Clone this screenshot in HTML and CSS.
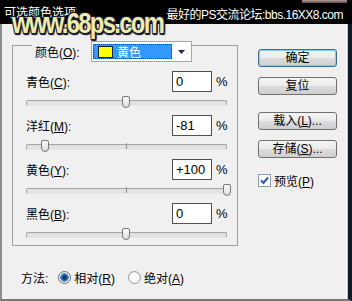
FILE: index.html
```html
<!DOCTYPE html>
<html lang="zh-CN">
<head>
    <meta charset="UTF-8">
    <title>可选颜色选项</title>
    <link rel="stylesheet" href="styles.css">
</head>
<body>
<div class="dlg">
    <div class="titlebar">
        <span class="title">可选颜色选项</span>
        <span class="forum">最好的PS交流论坛:bbs.16XX8.com</span>
        <span class="closebtn"></span>
    </div>
    <div class="wm">www.68ps.com</div>

    <div class="main">
        <div class="left">
            <div class="group">
                <div class="group-head">
                    <span class="lbl">颜色(<u>O</u>):</span>
                    <div class="select">
                        <div class="sel-val"><span class="swatch"></span>黄色</div>
                        <div class="sel-btn">
                            <svg width="7" height="4" viewBox="0 0 7 4"><path d="M0 0h7L3.5 4z" fill="#1a2a5a"/></svg>
                        </div>
                    </div>
                </div>

                <div class="chan">
                    <div class="chan-row"><span class="lbl">青色(<u>C</u>):</span><span class="num">0</span><span class="pct">%</span></div>
                    <div class="slider"><span class="thumb" style="left:96px"></span></div>
                </div>
                <div class="chan">
                    <div class="chan-row"><span class="lbl">洋红(<u>M</u>):</span><span class="num">-81</span><span class="pct">%</span></div>
                    <div class="slider tick"><span class="thumb" style="left:15px"></span></div>
                </div>
                <div class="chan">
                    <div class="chan-row"><span class="lbl">黄色(<u>Y</u>):</span><span class="num">+100</span><span class="pct">%</span></div>
                    <div class="slider tick"><span class="thumb" style="left:197px"></span></div>
                </div>
                <div class="chan">
                    <div class="chan-row"><span class="lbl">黑色(<u>B</u>):</span><span class="num">0</span><span class="pct">%</span></div>
                    <div class="slider"><span class="thumb" style="left:96px"></span></div>
                </div>
            </div>

            <div class="method">
                <span class="m-lbl">方法:</span>
                <span class="radio on"></span><span class="r-txt">相对(<u>R</u>)</span>
                <span class="radio"></span><span class="r-txt">绝对(<u>A</u>)</span>
            </div>
        </div>

        <div class="right">
            <div class="btn default">确定</div>
            <div class="btn">复位</div>
            <div class="btn gap">载入(<u>L</u>)...</div>
            <div class="btn">存储(<u>S</u>)...</div>
            <div class="check">
                <span class="box">
                    <svg width="9" height="9" viewBox="0 0 9 9"><path d="M1 4.5l2.5 2.5L8 1.5" fill="none" stroke="#2a5aa8" stroke-width="2"/></svg>
                </span>
                <span>预览(<u>P</u>)</span>
            </div>
        </div>
    </div>
</div>
</body>
</html>
```

FILE: styles.css
```css
* {
    box-sizing: border-box;
}

body {
    margin: 0;
    background: #f0f0f0;
}

.dlg {
    position: relative;
    width: 352px;
    height: 301px;
    display: flex;
    flex-direction: column;
    font: 12px "Liberation Sans", "Noto Sans CJK SC", sans-serif;
    color: #000;
    overflow: hidden;
}

u {
    text-decoration: underline;
    text-underline-offset: 1px;
}

/* title bar */
.titlebar {
    position: relative;
    height: 24px;
    background: #000;
    color: #fff;
    display: flex;
    align-items: flex-start;
    flex-shrink: 0;
}

.title {
    margin: 6px 0 0 4px;
    line-height: 14px;
}

.forum {
    margin: 8px 0 0 auto;
    padding-right: 9px;
    line-height: 14px;
    letter-spacing: -0.5px;
}

.closebtn {
    position: absolute;
    right: 5px;
    top: 0;
    width: 45px;
    height: 3px;
    background: linear-gradient(#b89a9a, #5a4a4a);
}

/* watermark over the title bar */
.wm {
    position: absolute;
    left: 12px;
    top: 8px;
    font: bold 29px "Liberation Sans", sans-serif;
    letter-spacing: -2px;
    line-height: 30px;
    color: #ececae;
    transform: scaleX(0.82);
    transform-origin: 0 0;
    text-shadow: 1px 1px 0 #1a1a30, -1px -1px 0 #1a1a30, 1px -1px 0 #1a1a30, -1px 1px 0 #1a1a30,
                 2px 2px 1px #1a1a30, 0 2px 1px #1a1a30, 2px 0 1px #1a1a30;
}

/* dialog body */
.main {
    flex: 1;
    display: flex;
    background: #f0f0f0;
    border-left: 2px solid #8c8c8c;
    border-right: 4px solid #0e1a26;
    border-bottom: 2px solid #777;
    box-shadow: inset -1px 0 0 #b4c4d8, inset -2px 0 0 #fff;
}

.left {
    width: 256px;
    padding: 21px 0 0 10px;
}

.group {
    width: 226px;
    border: 1px solid #a0a0a0;
    padding: 0 10px 5px 13px;
}

.group-head {
    display: inline-flex;
    align-items: center;
    height: 21px;
    margin: -8px 0 0 6px;
    padding: 0 0 0 3px;
    background: #f0f0f0;
}

.group-head .lbl {
    width: 56px;
}

.select {
    display: flex;
    width: 101px;
    height: 21px;
    border: 1px solid #a8a8a8;
    background: #fff;
    padding: 2px 1px 2px 1px;
}

.sel-val {
    width: 79px;
    display: flex;
    align-items: center;
    background: #3399ff;
    outline: 1px dotted #333;
    outline-offset: -1px;
    color: #fff;
    padding-left: 5px;
}

.swatch {
    width: 15px;
    height: 12px;
    background: #ffff00;
    border: 1px solid #202020;
    margin-right: 4px;
}

.sel-btn {
    flex: 1;
    display: flex;
    align-items: center;
    justify-content: center;
    padding-top: 1px;
}

/* channels */
.chan {
    margin-top: 7px;
}

.group-head + .chan {
    margin-top: 9px;
}

.chan-row {
    display: flex;
    align-items: center;
    height: 21px;
}

.chan-row .lbl {
    flex: 1;
}

.num {
    width: 40px;
    height: 21px;
    border: 1px solid #505050;
    background: #fff;
    padding: 2px 0 0 3px;
    font-size: 13px;
    line-height: 16px;
}

.pct {
    width: 11px;
    margin-left: 4px;
    font-size: 13px;
}

.slider {
    position: relative;
    width: 201px;
    height: 12px;
    margin-top: 4px;
}

.slider::before {
    content: "";
    position: absolute;
    left: 0;
    right: 0;
    top: 4px;
    height: 4px;
    border: 1px solid #a4a4a4;
    border-bottom-color: #e6e6e6;
    border-radius: 2px;
    background: #e2e2e2;
}

.slider.tick::after {
    content: "";
    position: absolute;
    left: 100px;
    top: 3px;
    width: 1px;
    height: 6px;
    background: #8c8c8c;
}

.thumb {
    position: absolute;
    top: 0;
    width: 8px;
    height: 12px;
    border: 1px solid #777;
    border-radius: 2px 2px 4px 4px;
    background: linear-gradient(#fbfbfb, #dcdcdc);
    z-index: 1;
}

/* method row */
.method {
    display: flex;
    align-items: center;
    height: 16px;
    margin: 23px 0 0 9px;
}

.m-lbl {
    margin-right: 10px;
}

.radio {
    width: 13px;
    height: 13px;
    border-radius: 50%;
    border: 1px solid #9a9a9a;
    background: radial-gradient(circle, #fff 30%, #e4e4e4 100%);
    margin-right: 3px;
}

.radio.on {
    background: radial-gradient(circle, #1a3c70 0 2px, #3d7fc4 3px 4px, #eef2f6 4.5px);
    border-color: #5a6a80;
}

.r-txt + .radio {
    margin-left: 13px;
}

/* right column */
.right {
    display: flex;
    flex-direction: column;
    padding-top: 25px;
}

.btn {
    width: 79px;
    height: 18px;
    margin-bottom: 10px;
    border: 1px solid #707070;
    border-radius: 3px;
    background: linear-gradient(#f4f4f4, #ececec 48%, #dcdcdc 52%, #cfcfcf);
    display: flex;
    align-items: center;
    justify-content: center;
    line-height: 14px;
}

.btn.default {
    border-color: #3c6f96;
    box-shadow: inset 0 0 0 1px #7fd0f0;
}

.btn.gap {
    margin-top: 7px;
}

.check {
    display: flex;
    align-items: center;
    margin-top: 5px;
    height: 14px;
}

.check .box {
    width: 13px;
    height: 13px;
    border: 1px solid #8a9ab0;
    background: #fff;
    display: flex;
    align-items: center;
    justify-content: center;
    margin-right: 3px;
}
```
